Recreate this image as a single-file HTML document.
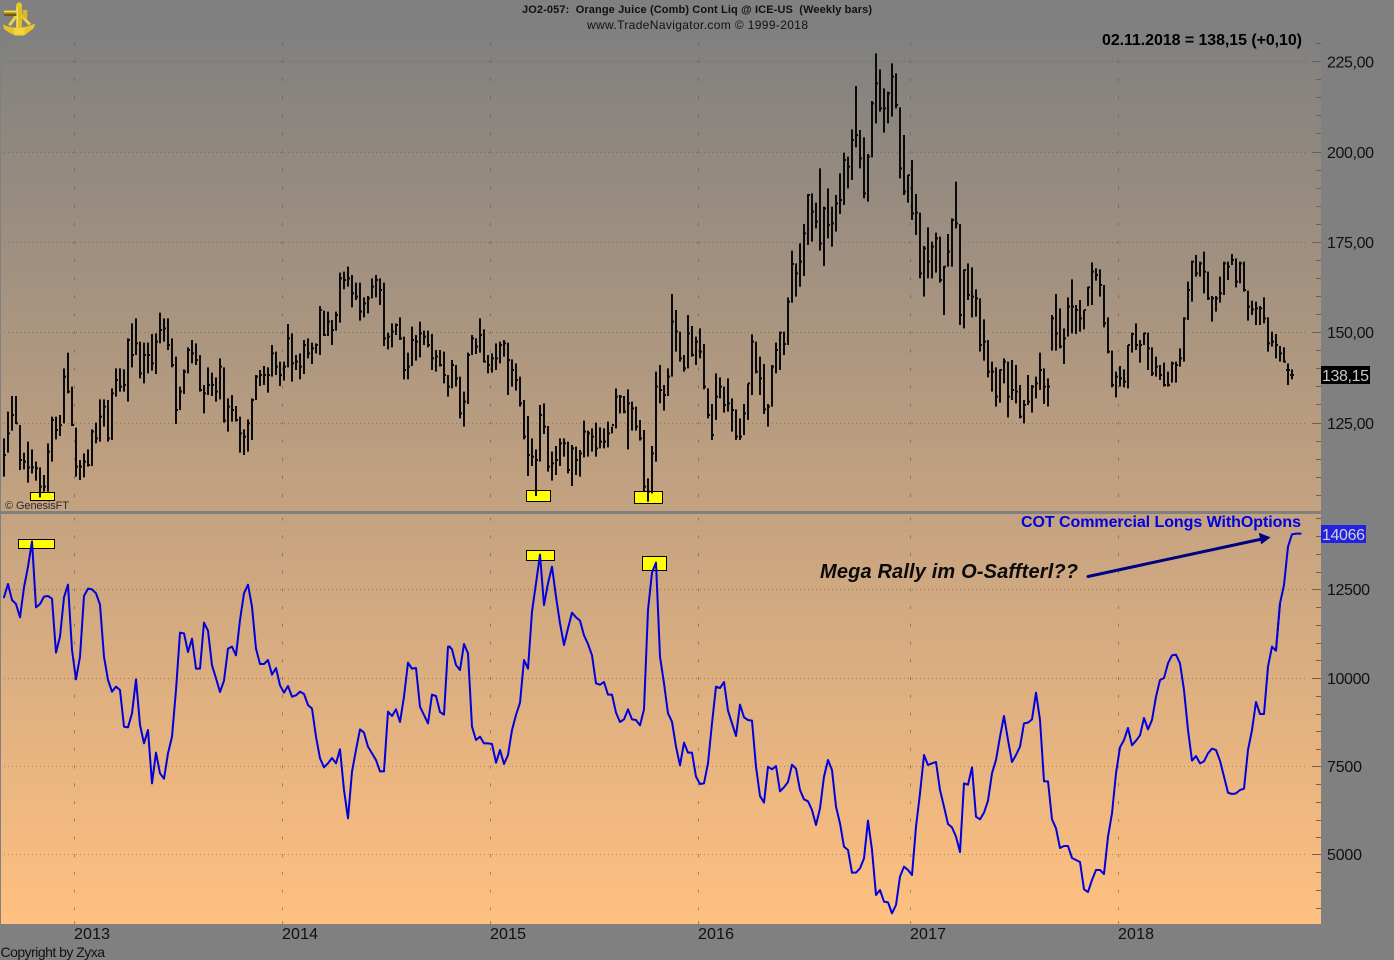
<!DOCTYPE html>
<html><head><meta charset="utf-8"><title>Orange Juice Chart</title>
<style>
html,body{margin:0;padding:0;background:#808080;width:1394px;height:960px;overflow:hidden}
svg{position:absolute;left:0;top:0;display:block}
text{font-family:"Liberation Sans",Arial,sans-serif;fill:#111}
</style></head><body>
<svg width="1394" height="960" viewBox="0 0 1394 960" xmlns="http://www.w3.org/2000/svg">
<defs><linearGradient id="bg" x1="0" y1="0" x2="0" y2="1"><stop offset="0" stop-color="#808080"/><stop offset="1" stop-color="#ffc080"/></linearGradient></defs>
<rect width="1394" height="960" fill="#808080"/>
<rect x="1" y="32" width="1320" height="892" fill="url(#bg)"/>

<!-- horizontal dotted grid -->
<g stroke="#4a4030" stroke-opacity=".42" stroke-width="1" stroke-dasharray="1 3" fill="none">
<path d="M4 61.5H1308M4 152.5H1308M4 242.5H1308M4 332.5H1308M4 423.5H1308M4 589.5H1308M4 678.5H1308M4 766.5H1308M4 854.5H1308"/>
</g>
<!-- vertical dashed grid -->
<g stroke="#5b5145" stroke-opacity=".55" stroke-width="1" fill="none">
<path stroke-dasharray="3 15.08" d="M74.5 42V511M282.5 42V511M490.5 42V511M698.5 42V511M910.5 42V511M1118.5 42V511"/>
<path stroke-dasharray="3 14.72" d="M74.5 517.5V915M282.5 517.5V915M490.5 517.5V915M698.5 517.5V915M910.5 517.5V915M1118.5 517.5V915"/>
<path d="M74.5 921V924M282.5 921V924M490.5 921V924M698.5 921V924M910.5 921V924M1118.5 921V924"/>
</g>
<!-- right-axis ticks -->
<g stroke="#6b6055" stroke-width="1" fill="none">
<path d="M1312 61.5h9M1312 152.5h9M1312 242.5h9M1312 332.5h9M1312 423.5h9M1312 589.5h9M1312 678.5h9M1312 766.5h9M1312 854.5h9"/>
<path d="M1316 43.5h5M1316 79.5h5M1316 97.5h5M1316 115.5h5M1316 133.5h5M1316 170.5h5M1316 188.5h5M1316 206.5h5M1316 224.5h5M1316 260.5h5M1316 278.5h5M1316 296.5h5M1316 314.5h5M1316 350.5h5M1316 368.5h5M1316 386.5h5M1316 404.5h5M1316 441.5h5M1316 459.5h5M1316 477.5h5M1316 495.5h5"/>
<path d="M1316 518.5h5M1316 536.5h5M1316 554.5h5M1316 572.5h5M1316 607.5h5M1316 625.5h5M1316 643.5h5M1316 660.5h5M1316 696.5h5M1316 714.5h5M1316 731.5h5M1316 749.5h5M1316 784.5h5M1316 802.5h5M1316 820.5h5M1316 837.5h5M1316 872.5h5M1316 890.5h5M1316 908.5h5"/>
</g>
<!-- divider -->
<rect x="0" y="511" width="1321" height="3" fill="#808080"/>

<!-- yellow markers -->
<g fill="#ffff00" stroke="#000" stroke-width="1">
<rect x="30.5" y="492.5" width="24" height="8"/>
<rect x="526.5" y="490.5" width="24" height="11"/>
<rect x="634.5" y="491.5" width="28" height="12"/>
<rect x="18.5" y="539.5" width="36" height="9"/>
<rect x="526.5" y="550.5" width="28" height="10"/>
<rect x="642.5" y="556.5" width="24" height="14"/>
</g>

<!-- price bars -->
<g fill="none" stroke="#0a0a0a" stroke-width="6">
<path transform="translate(0 260) scale(.33333)" d="M12 535V650M12 585h6M24 455V578M24 520h6M36 408V512M36 465h6M48 408V492M48 490h6M60 495V630M60 600h6M72 578V628M72 605h6M84 545V668M84 622h6M96 568V640M96 622h6M108 605V662M108 625h6M120 622V712M120 680h6M132 645V695M132 680h6M144 550V695M144 575h6M156 470V605M156 480h6M168 470V538M168 510h6M180 465V528M180 495h6M192 325V490M192 350h6M204 278V400M204 395h6M216 380V498M216 495h6M228 503V650M228 620h6M240 600V660M240 620h6M252 580V652M252 605h6M264 568V620M264 615h6M276 508V618M276 515h6M288 488V550M288 535h6M300 418V545M300 470h6M312 418V500M312 440h6M324 420V545M324 535h6M336 385V540M336 400h6M348 325V410M348 360h6M360 325V395M360 380h6M372 328V395M372 375h6M384 235V425M384 240h6M396 190V322M396 285h6M408 175V285M408 250h6M420 245V355M420 340h6M432 248V370M432 285h6M444 248V340M444 285h6M456 222V332M456 310h6M468 220V342M468 245h6M480 158V250M480 210h6M492 175V245M492 205h6M504 175V270M504 255h6M516 235V322M516 315h6M528 290V492M528 450h6M540 380V450M540 395h6M552 328V402M552 335h6M564 262V340M564 270h6M576 240V310M576 280h6M588 250V315M588 300h6M600 285V395M600 390h6M612 375V460M612 400h6M624 322V405M624 375h6M636 338V408M636 375h6M648 352V425M648 395h6M660 295V418M660 320h6M672 322V488M672 482h6M684 415V515M684 440h6M696 405V485M696 450h6M708 438V485M708 480h6M720 470V578M720 520h6M732 508V585M732 530h6M744 478V575M744 490h6M756 415V540M756 420h6M768 345V420M768 350h6M780 330V378M780 345h6M792 318V375M792 345h6M804 322V398M804 345h6M816 255V350M816 280h6M828 275V345M828 320h6M840 305V378M840 345h6M852 305V362M852 320h6M864 192V322M864 235h6M876 220V365M876 310h6M888 285V330M888 305h6M900 280V358M900 320h6M912 240V342M912 255h6M924 235V295M924 280h6M936 248V312M936 265h6M948 250V280M948 255h6M960 138V285M960 150h6M972 152V228M972 225h6M984 155V228M984 185h6M996 180V255M996 210h6M1008 155V212M1008 165h6M1020 38V188M1020 55h6M1032 35V88M1032 60h6M1044 20V80M1044 55h6"/>
<path transform="translate(350 260) scale(.33333)" d="M6 45V142M6 100h6M18 68V120M18 110h6M30 68V182M30 155h6M42 112V172M42 130h6M54 108V160M54 115h6M66 55V115M66 80h6M78 45V112M78 60h6M90 55V135M90 90h6M102 68V258M102 235h6M114 218V268M114 230h6M126 190V262M126 215h6M138 190V225M138 195h6M150 172V240M150 235h6M162 230V358M162 330h6M174 278V358M174 320h6M186 200V318M186 240h6M198 225V302M198 245h6M210 185V292M210 220h6M222 212V255M222 230h6M234 212V262M234 255h6M246 222V330M246 295h6M258 270V335M258 290h6M270 270V320M270 315h6M282 275V370M282 345h6M294 345V410M294 380h6M306 300V385M306 315h6M318 315V380M318 355h6M330 350V475M330 460h6M342 395V500M342 425h6M354 278V432M354 285h6M366 225V285M366 235h6M378 235V282M378 260h6M390 175V278M390 225h6M402 208V308M402 305h6M414 285V340M414 315h6M426 280V338M426 295h6M438 250V330M438 295h6M450 245V310M450 255h6M462 240V290M462 250h6M474 248V405M474 300h6M486 298V380M486 330h6M498 310V392M498 360h6M510 350V440M510 430h6M522 420V538M522 530h6M534 468V648M534 585h6M546 535V618M546 590h6M558 568V708M558 600h6M570 435V605M570 465h6M582 430V522M582 500h6M594 498V635M594 620h6M606 575V662M606 610h6M618 558V645M618 600h6M630 535V618M630 550h6M642 535V590M642 550h6M654 545V640M654 630h6M666 555V678M666 565h6M678 560V645M678 600h6M690 570V650M690 580h6M702 482V592M702 515h6M714 512V590M714 520h6M726 505V575M726 530h6M738 488V590M738 565h6M750 502V565M750 545h6M762 505V565M762 545h6M774 485V562M774 520h6M786 500V520M786 495h6M798 385V505M798 410h6M810 405V460M810 410h6M822 408V460M822 455h6M834 388V568M834 430h6M846 425V512M846 445h6M858 440V512M858 500h6M870 480V542M870 535h6M882 510V695M882 680h6M894 655V725M894 695h6M906 558V700M906 580h6M918 335V605M918 380h6M930 315V430M930 390h6M942 375V452M942 405h6M954 325V408M954 350h6M966 102V350M966 185h6M978 150V275M978 215h6M990 215V305M990 295h6M1002 285V335M1002 325h6M1014 165V325M1014 220h6M1026 198V290M1026 285h6M1038 230V315M1038 245h6"/>
<path transform="translate(700 40) scale(.33333)" d="M0 865V955M0 935h6M12 912V1048M12 1040h6M24 1045V1135M24 1125h6M36 1092V1200M36 1185h6M48 1000V1140M48 1070h6M60 1012V1075M60 1040h6M72 1040V1118M72 1095h6M84 1015V1115M84 1090h6M96 1075V1175M96 1110h6M108 1108V1200M108 1190h6M120 1135V1200M120 1190h6M132 1092V1185M132 1120h6M144 1030V1140M144 1030h6M156 883V1065M156 905h6M168 905V1000M168 995h6M180 950V1065M180 1015h6M192 972V1122M192 1108h6M204 1092V1160M204 1100h6M216 975V1100M216 980h6M228 908V1000M228 930h6M240 875V990M240 878h6M252 875V945M252 912h6M264 772V915M264 785h6M276 632V788M276 672h6M288 670V770M288 700h6M300 610V740M300 665h6M312 552V708M312 580h6M324 462V615M324 465h6M336 460V605M336 515h6M348 488V565M348 545h6M360 385V632M360 610h6M372 500V678M372 505h6M384 445V595M384 555h6M396 500V620M396 550h6M408 465V575M408 490h6M420 400V522M420 480h6M432 338V495M432 360h6M444 350V445M444 380h6M456 268V420M456 300h6M468 138V322M468 285h6M480 270V385M480 355h6M492 292V475M492 460h6M504 342V485M504 350h6M516 183V352M516 190h6M528 40V250M528 130h6M540 88V215M540 205h6M552 145V278M552 205h6M564 155V250M564 160h6M576 70V230M576 110h6M588 100V205M588 195h6M600 202V415M600 385h6M612 285V465M612 455h6M624 405V488M624 405h6M636 360V540M636 520h6M648 462V585M648 518h6M660 518V715M660 700h6M672 618V770M672 625h6M684 562V715M684 665h6M696 605V715M696 620h6M708 578V698M708 595h6M720 590V728M720 720h6M732 678V825M732 680h6M744 582V680M744 635h6M756 535V680M756 540h6M768 425V565M768 550h6M780 552V855M780 825h6M792 688V865M792 690h6M804 670V780M804 765h6M816 682V832M816 770h6M828 748V830M828 775h6M840 775V935M840 915h6M852 838V962M852 905h6M864 900V1012M864 995h6M876 965V1055M876 995h6M888 982V1100M888 1070h6M900 988V1088M900 990h6M912 955V1030M912 965h6M924 965V1132M924 1070h6M936 960V1080M936 1050h6M948 975V1090M948 1055h6M960 1035V1135M960 1130h6M972 1080V1150M972 1095h6M984 1005V1095M984 1085h6M996 1035V1118M996 1040h6M1008 1010V1075M1008 1030h6M1020 938V1050M1020 990h6M1032 985V1092M1032 1040h6M1044 1015V1100M1044 1040h6"/>
<path transform="translate(1040 230) scale(.33333)" d="M36 255V362M36 265h6M48 192V362M48 310h6M60 235V355M60 350h6M72 295V402M72 325h6M84 202V320M84 230h6M96 148V310M96 230h6M108 225V312M108 240h6M120 210V305M120 265h6M132 240V298M132 240h6M144 170V228M144 172h6M156 97V225M156 125h6M168 115V152M168 135h6M180 118V200M180 165h6M192 165V292M192 280h6M204 262V370M204 365h6M216 362V472M216 465h6M228 425V502M228 440h6M240 408V470M240 445h6M252 418V472M252 455h6M264 345V475M264 345h6M276 308V368M276 312h6M288 280V360M288 345h6M300 330V398M300 345h6M312 308V345M312 310h6M324 308V420M324 355h6M336 352V438M336 430h6M348 380V440M348 410h6M360 405V450M360 435h6M372 398V470M372 465h6M384 425V470M384 465h6M396 395V458M396 400h6M408 395V458M408 405h6M420 355V410M420 385h6M432 262V395M432 265h6M444 155V270M444 180h6M456 92V215M456 95h6M468 75V140M468 130h6M480 95V140M480 100h6M492 65V190M492 125h6M504 125V210M504 205h6M516 198V275M516 205h6M528 198V245M528 205h6M540 140V218M540 190h6M552 95V195M552 100h6M564 95V150M564 110h6M576 72V105M576 90h6M588 85V172M588 155h6M600 95V160M600 100h6M612 95V185M612 180h6M624 182V272M624 230h6M636 212V255M636 238h6M648 215V285M648 235h6M660 228V285M660 235h6M672 202V280M672 265h6M684 262V365M684 340h6M696 305V350M696 335h6M708 312V385M708 345h6M720 348V395M720 370h6M732 352V398M732 395h6M744 400V465M744 420h6M756 418V448M756 435h6M744 420h-6M756 435h-6"/>
</g>

<!-- blue COT line -->
<g fill="none" stroke="#0000dc" stroke-width="6" stroke-linejoin="round" stroke-linecap="round">
<polyline transform="translate(0 510) scale(.33333)" points="12,262 24,222 36,270 48,282 60,322 72,232 84,170 96,94 108,292 120,282 132,260 144,258 156,266 168,428 180,380 192,262 204,224 216,420 228,508 240,440 252,258 264,236 276,238 288,250 300,284 312,440 324,510 336,545 348,530 360,540 372,650 384,652 396,610 408,508 420,645 432,700 444,660 456,820 468,728 480,790 492,806 504,730 516,680 528,540 540,368 552,370 564,426 576,386 588,476 600,476 612,338 624,362 636,466 648,505 660,546 672,512 684,416 696,410 708,436 720,330 732,250 744,224 756,290 768,416 780,462 792,462 804,450 816,494 828,474 840,526 852,548 864,528 876,560 888,556 900,545 912,552 924,585 936,596 948,680 960,745 972,772 984,760 996,744 1008,760 1020,718 1032,840 1044,925 1056,785 1068,720 1080,658 1092,668 1104,710 1116,730 1128,750 1140,784 1152,784 1164,605 1176,618 1188,598 1200,636 1212,560 1224,458 1236,476 1248,474 1260,590 1272,615 1284,640 1296,554 1308,558 1320,606 1332,614 1344,410 1350,410"/>
<polyline transform="translate(450 530) scale(.33333)" points="0,352 6,358 18,405 30,420 42,342 54,370 66,590 78,630 90,620 102,640 114,640 126,642 138,698 150,660 162,702 174,675 186,600 198,555 210,518 222,390 234,416 246,245 258,160 270,74 282,225 294,160 306,110 318,200 330,280 342,345 354,295 366,248 378,262 390,272 402,316 414,342 426,376 438,460 450,464 462,456 474,494 486,494 498,548 510,576 522,568 534,538 546,568 558,570 570,586 582,538 594,240 606,128 618,98 630,380 642,460 654,550 666,575 678,650 690,706 702,638 714,668 726,668 738,740 750,762 762,760 774,700 786,580 798,470 810,474 822,456 834,542 846,580 858,618 870,524 882,562 894,570 906,572 918,710 930,798 942,818 954,710 966,718 978,708 990,784 1002,772 1014,756 1026,704 1038,716 1050,780 1062,808 1074,814 1086,840 1098,885 1110,835 1122,740 1134,690 1146,720 1158,830 1170,880 1182,950 1194,960 1206,1028"/>
<polyline transform="translate(850 640) scale(.33333)" points="6,698 18,698 30,685 42,655 54,542 66,630 78,765 90,750 102,785 114,787 126,820 138,795 150,710 162,680 174,690 186,705 198,560 210,460 222,345 234,375 246,370 258,366 270,450 282,500 294,552 306,562 318,590 330,636 342,430 354,434 366,382 378,530 390,538 402,518 414,482 426,400 438,360 450,290 462,228 474,300 486,366 498,345 510,320 522,250 534,248 546,238 558,158 570,240 582,424 594,424 606,538 618,565 630,624 642,618 654,618 666,654 678,660 690,666 702,748 714,756 726,720 738,690 750,690 762,702 774,590 786,520 798,400 810,322 822,300 834,264 846,316 858,302 870,286 882,234 894,268 906,240 918,170 930,120 942,114 954,70 966,46 978,44 990,70 1002,150 1014,270 1026,362 1038,348 1050,370 1062,364 1074,340 1086,326 1098,330 1110,362 1122,410 1134,458 1146,462 1158,460 1170,450 1182,446 1194,330 1206,270 1218,186 1230,222 1242,222 1254,80 1266,20 1278,32 1290,-110"/>
<polyline transform="translate(1000 500) scale(.33333)" points="828,450 840,310 852,255 864,140 876,103 888,101 902,101"/>
</g>

<!-- navy arrow -->
<path d="M1088 576.5L1262 539" stroke="#000080" stroke-width="3" fill="none" stroke-linecap="round"/>
<path d="M1269.5 537.5L1259.5 533.5L1261.5 543.5Z" fill="#000080" stroke="#000080" stroke-width="1"/>

<!-- logo: brass sextant -->
<g transform="scale(.33333)">
<path d="M8 74Q55 94 106 70L100 86Q82 100 72 107H46Q30 100 13 88Z" fill="#e6c42c"/>
<path d="M52 44L28 76M62 44L90 74" stroke="#ecd044" stroke-width="9" fill="none"/>
<path d="M49 14H66V102H49Z" fill="#e2be26"/>
<path d="M49 14H54V102H49Z" fill="#f4e060"/>
<circle cx="57" cy="15" r="8" fill="#e8c82c"/>
<path d="M12 32H49V48H12Z" fill="#c4a41e"/>
<path d="M12 41H49V48H12Z" fill="#6e5a10"/>
<path d="M12 32H49V36H12Z" fill="#f4e060"/>
<path d="M68 30H82V54H68Z" fill="#d8b828"/>
<path d="M42 84H74V104H42Z" fill="#f2d63a"/>
</g>

<!-- titles -->
<text x="522" y="13" font-size="11" font-weight="bold" textLength="350" xml:space="preserve">JO2-057:  Orange Juice (Comb) Cont Liq @ ICE-US  (Weekly bars)</text>
<text x="587" y="29" font-size="12" textLength="221">www.TradeNavigator.com © 1999-2018</text>
<text x="1102" y="45" font-size="16" font-weight="bold" textLength="200" style="fill:#000">02.11.2018 = 138,15 (+0,10)</text>
<text x="5" y="509" font-size="11" textLength="64" style="fill:#2a2a2a">© GenesisFT</text>
<text x="1021" y="527" font-size="16" font-weight="bold" textLength="280" style="fill:#0000e0">COT Commercial Longs WithOptions</text>
<text x="820" y="578" font-size="20" font-weight="bold" font-style="italic" textLength="258" style="fill:#0a0a0a">Mega Rally im O-Saffterl??</text>

<!-- axis labels -->
<g font-size="16">
<text x="1327" y="67.5" textLength="47">225,00</text>
<text x="1327" y="158" textLength="47">200,00</text>
<text x="1327" y="248" textLength="47">175,00</text>
<text x="1327" y="338" textLength="47">150,00</text>
<text x="1327" y="429" textLength="47">125,00</text>
<text x="1327" y="595" textLength="43">12500</text>
<text x="1327" y="684" textLength="43">10000</text>
<text x="1327" y="772" textLength="35">7500</text>
<text x="1327" y="860" textLength="35">5000</text>
<text x="74" y="939" textLength="36">2013</text>
<text x="282" y="939" textLength="36">2014</text>
<text x="490" y="939" textLength="36">2015</text>
<text x="698" y="939" textLength="36">2016</text>
<text x="910" y="939" textLength="36">2017</text>
<text x="1118" y="939" textLength="36">2018</text>
</g>
<rect x="1321" y="366" width="49" height="18" fill="#000"/>
<text x="1322" y="381" font-size="16" textLength="47" style="fill:#c8c8c8">138,15</text>
<rect x="1321" y="525" width="45" height="18" fill="#2222e0"/>
<text x="1322" y="540" font-size="16" textLength="43" style="fill:#d0d0d8">14066</text>
<text x="0.5" y="957" font-size="14" textLength="104.5">Copyright by Zyxa</text>
</svg>
</body></html>
